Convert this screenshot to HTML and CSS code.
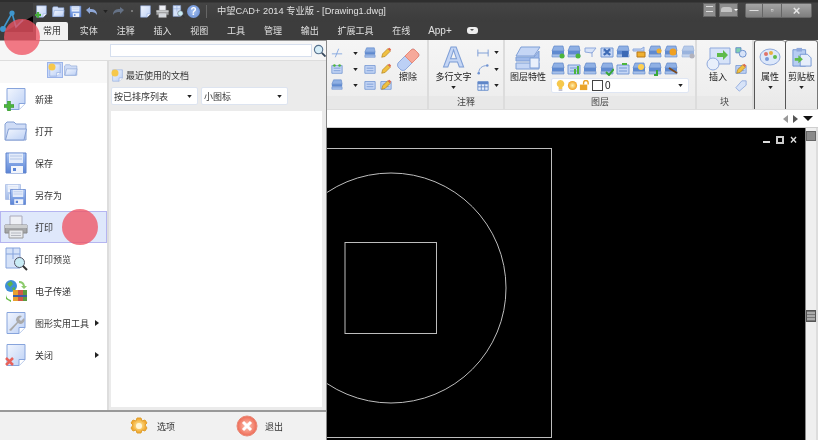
FILE: index.html
```html
<!DOCTYPE html>
<html lang="zh">
<head>
<meta charset="utf-8">
<title>中望CAD+ 2014 专业版</title>
<link rel="stylesheet" href="styles.css">
</head>
<body>
<svg class="defs" width="0" height="0" aria-hidden="true">
  <defs>
    <linearGradient id="pg" x1="0" y1="0" x2="1" y2="1"><stop offset="0" stop-color="#f2f6fe"/><stop offset="1" stop-color="#bcd0f5"/></linearGradient>
    <linearGradient id="bl" x1="0" y1="0" x2="0" y2="1"><stop offset="0" stop-color="#a9c4f2"/><stop offset="1" stop-color="#5a84d6"/></linearGradient>
    <radialGradient id="sun"><stop offset="0" stop-color="#fff2b0"/><stop offset="1" stop-color="#f0a020"/></radialGradient>
    <radialGradient id="redc"><stop offset="0" stop-color="#ffc9b8"/><stop offset="1" stop-color="#ee6a55"/></radialGradient>
    <symbol id="page" viewBox="0 0 24 24"><path d="M3 1.500h18v15l-6 6H3z" fill="url(#pg)" stroke="#87a4dc"/><path d="M21 16.500h-6v6" fill="#fff" stroke="#87a4dc"/></symbol>
    <symbol id="folder" viewBox="0 0 24 24"><path d="M1 21V5l2-2h7l2 2h10v16z" fill="#cfdcf6" stroke="#85a0d4"/><path d="M1.500 21l3-11h18l-2.500 11z" fill="url(#pg)" stroke="#85a0d4"/></symbol>
    <symbol id="floppy" viewBox="0 0 24 24"><path d="M2 2h20v20H2z" fill="url(#bl)" stroke="#5f82cc"/><path d="M5 2.500h14V12H5z" fill="#e4ecfa"/><path d="M6 5h12M6 8h12" stroke="#b4c6e8"/><path d="M7 15h12v7H7z" fill="#f2f5fb"/><path d="M9 17h3v3H9z" fill="#5a84d6"/></symbol>
    <symbol id="printer" viewBox="0 0 24 24"><path d="M6 1h12v10H6z" fill="#eef0f5" stroke="#aab"/><path d="M1 10h22v8H1z" fill="#a4a6a8" stroke="#888"/><path d="M1 10h22v3H1z" fill="#cccecf"/><path d="M5 15h14v8H5z" fill="#e8eaee" stroke="#999"/><path d="M7 18h10M7 20.500h10" stroke="#b5b8c0"/></symbol>
    <symbol id="preview" viewBox="0 0 24 24"><path d="M2 1h14v20H2z" fill="#d5e2f8" stroke="#87a4dc"/><path d="M9 1v11M2 7h14" stroke="#87a4dc"/><circle cx="15.500" cy="15.500" r="5" fill="#c9ecf5" stroke="#556"/><path d="M19 19l4 4" stroke="#333" stroke-width="2"/></symbol>
    <symbol id="etrans" viewBox="0 0 24 24"><circle cx="7" cy="7" r="6" fill="#3f8fd8"/><path d="M3 5l4-3 2 3-3 3zM8 9l3-1v3l-2 1z" fill="#5cb24a"/><path d="M15 2a6 6 0 0 1 6 5h2l-3 3-3-3h2a4 4 0 0 0-4-3z" fill="#8ccb6c"/><path d="M2 15a6 6 0 0 0 5 6v2l-5-3z" fill="#6cbb4c"/><path d="M9 11h5v11H9z" fill="#e8a030"/><path d="M14 11h5v11h-5z" fill="#d05848"/><path d="M19 11h4v11h-4z" fill="#5c9a40"/><path d="M9 16h14v2H9z" fill="#3a5fa8"/></symbol>
    <symbol id="plus" viewBox="0 0 10 10"><path d="M3.500 0h3v3.500H10v3H6.500V10h-3V6.500H0v-3h3.500z" fill="#4cb53c" stroke="#2e8a2a" stroke-width=".5"/></symbol>
    <symbol id="layer" viewBox="0 0 14 14"><path d="M3 1h9l1 5H1z" fill="#8fb0e4" stroke="#5f86c8" stroke-width=".7"/><path d="M1 6h12v3H1z" fill="#5f8ad0"/><path d="M1 9.500h12V12H1z" fill="#a5c0ec" stroke="#5f86c8" stroke-width=".6"/></symbol>
    <symbol id="small" viewBox="0 0 14 14"><path d="M1 3h12v9H1z" fill="#c5d6f5" stroke="#7598d4"/><path d="M3 6h8M3 9h8" stroke="#7598d4"/></symbol>
    <symbol id="pencil" viewBox="0 0 14 14"><path d="M2 12l1-4 6-6 3 3-6 6z" fill="#f0c040" stroke="#a87818" stroke-width=".7"/><path d="M9 2l3 3 1-2-2-2z" fill="#e06a50"/></symbol>
    <symbol id="caret" viewBox="0 0 6 4"><path d="M0 0h6L3 4z" fill="#222"/></symbol>
    <symbol id="mag" viewBox="0 0 14 14"><circle cx="6" cy="6" r="4.500" fill="#d7eef8" stroke="#55708c" stroke-width="1.200"/><path d="M9.500 9.500l4 4" stroke="#37485c" stroke-width="2"/></symbol>
  </defs>
</svg>

<div class="app">
  <header class="titlebar">
    <svg class="logo" viewBox="0 0 33 30"><path d="M0 0h33v30H0z" fill="#3a3a3a"/><path d="M33 14V30H4z" fill="#000"/><path d="M3 27L12 11l4 14 7-7" fill="none" stroke="#3f97cf" stroke-width="1.600"/><circle cx="12" cy="11" r="2.600" fill="#3f97cf"/><circle cx="3" cy="27" r="3" fill="#3f97cf"/></svg>
    <div class="quick">
      <svg class="q"><use href="#page"/><use href="#plus" width="6" height="6" x="0" y="7"/></svg>
      <svg class="q"><use href="#folder"/></svg>
      <svg class="q"><use href="#floppy"/></svg>
      <svg class="q wide" viewBox="0 0 14 12"><path d="M1 5l4-3v2c4 0 7 1 7 6-2-3-4-3-7-3v2z" fill="#8fa8d8"/></svg>
      <svg class="cr"><use href="#caret"/></svg>
      <svg class="q wide dim" viewBox="0 0 14 12"><path d="M13 5L9 2v2C5 4 2 5 2 10c2-3 4-3 7-3v2z" fill="#6f7f98"/></svg>
      <span class="dot"></span>
      <svg class="q"><use href="#page"/></svg>
      <svg class="q"><use href="#printer"/></svg>
      <svg class="q tight"><use href="#preview"/></svg>
      <span class="help">?</span>
    </div>
    <span class="sep"></span>
    <span class="title">中望CAD+ 2014 专业版 - [Drawing1.dwg]</span>
    <div class="winbtns">
      <span class="tool"><i></i></span>
      <span class="tool skin"><i></i><b></b></span>
      <div class="caption"><span class="cap">—</span><span class="cap">▫</span><span class="cap closecap">×</span></div>
    </div>
  </header>

  <nav class="tabs">
    <span class="tab active">常用</span>
    <span class="tab">实体</span>
    <span class="tab">注释</span>
    <span class="tab">插入</span>
    <span class="tab">视图</span>
    <span class="tab">工具</span>
    <span class="tab">管理</span>
    <span class="tab">输出</span>
    <span class="tab">扩展工具</span>
    <span class="tab">在线</span>
    <span class="tab latin">App+</span>
    <span class="tabdown"></span>
  </nav>

  <section class="ribbon">
    <div class="panel p-draw">
      <div class="pbody">
        <div class="smallgrid">
          <svg class="s14" viewBox="0 0 14 14"><path d="M1 8h12M9 2L5 12" stroke="#7ea3de" fill="none"/></svg><svg class="cr"><use href="#caret"/></svg><svg class="s14"><use href="#layer"/></svg><svg class="s14"><use href="#pencil"/></svg>
          <svg class="s14" viewBox="0 0 14 14"><use href="#small"/><circle cx="4" cy="3" r="1.500" fill="#4cb53c"/><circle cx="10" cy="3" r="1.500" fill="#4cb53c"/></svg><svg class="cr"><use href="#caret"/></svg><svg class="s14"><use href="#small"/></svg><svg class="s14"><use href="#pencil"/></svg>
          <svg class="s14"><use href="#layer"/></svg><svg class="cr"><use href="#caret"/></svg><svg class="s14"><use href="#small"/></svg><svg class="s14"><use href="#small"/><use href="#pencil"/></svg>
        </div>
        <div class="big erase">
          <svg class="b24" viewBox="0 0 24 24"><path d="M2 16L15 3q2-2 4 0l3 3q2 2 0 4L9 23q-2 1-4 0l-3-3q-1-2 0-4z" fill="#bcd0f5" stroke="#8fa9dc"/><path d="M9 9l6-6q2-2 4 0l3 3q2 2 0 4l-6 6z" fill="#f6a99a" stroke="#e88a78"/></svg>
          <span class="lbl">擦除</span>
        </div>
      </div>
      <div class="plabel"></div>
    </div>
    <div class="panel p-note">
      <div class="pbody">
        <div class="big text">
          <span class="biga">A</span>
          <span class="lbl">多行文字</span>
          <svg class="cr"><use href="#caret"/></svg>
        </div>
        <div class="smallcol">
          <span><svg class="s14" viewBox="0 0 14 14"><path d="M1 3v8M13 3v8M1 7h12" stroke="#6f93d2" fill="none"/></svg><svg class="cr"><use href="#caret"/></svg></span>
          <span><svg class="s14" viewBox="0 0 14 14"><path d="M2 12C2 6 6 3 12 3" stroke="#6f93d2" fill="none"/><circle cx="2" cy="12" r="1.500" fill="#6f93d2"/><circle cx="12" cy="3" r="1.500" fill="#6f93d2"/></svg><svg class="cr"><use href="#caret"/></svg></span>
          <span><svg class="s14" viewBox="0 0 14 14"><path d="M1 2h12v10H1z" fill="#e5edfb" stroke="#5f86c8"/><path d="M1 2h12v3H1z" fill="#5f86c8"/><path d="M1 8h12M5 5v7M9 5v7" stroke="#5f86c8"/></svg><svg class="cr"><use href="#caret"/></svg></span>
        </div>
      </div>
      <div class="plabel">注释</div>
    </div>
    <div class="panel p-layer">
      <div class="pbody">
        <div class="big stack">
          <svg class="b26" viewBox="0 0 26 24"><path d="M6 1h19l-6 9H1z" fill="#c5d6f5" stroke="#7f9fd6"/><path d="M1 11h18l5-6v10H1z" fill="#9fbaea" stroke="#7f9fd6"/><path d="M1 17h23v6H1z" fill="#c5d6f5" stroke="#7f9fd6"/><path d="M15 12h9v10h-9z" fill="#eaf0fb" stroke="#7f9fd6"/></svg>
          <span class="lbl">图层特性</span>
        </div>
        <div class="layerside">
          <div class="layergrid">
            <svg class="s14"><use href="#layer"/><circle cx="11" cy="11" r="2.500" fill="#4cb53c"/></svg>
            <svg class="s14"><use href="#layer"/><circle cx="11" cy="11" r="2.500" fill="#4cb53c"/></svg>
            <svg class="s14" viewBox="0 0 14 14"><path d="M2 3h11l-4 5-7-1z" fill="#d7e3f8" stroke="#8fa9dc"/><path d="M9 7v5" stroke="#8fa9dc"/></svg>
            <svg class="s14"><use href="#small"/><path d="M4 4l6 6M10 4l-6 6" stroke="#3d6ab5" stroke-width="2"/></svg>
            <svg class="s14"><use href="#layer"/><path d="M6 6h6v6H6z" fill="#3d6ab5"/></svg>
            <svg class="s14" viewBox="0 0 14 14"><path d="M1 4h8l3-2v4H1z" fill="#c5d6f5" stroke="#8fa9dc"/><path d="M5 7h8v5H5z" fill="#f0b030" stroke="#b87818"/></svg>
            <svg class="s14"><use href="#layer"/><circle cx="11" cy="6" r="2.500" fill="#f0b030"/></svg>
            <svg class="s14"><use href="#layer"/><circle cx="9" cy="7" r="3.500" fill="#f0a020"/></svg>
            <svg class="s14 fade"><use href="#layer"/><circle cx="11" cy="11" r="2.500" fill="#889"/></svg>
            <svg class="s14"><use href="#layer"/></svg>
            <svg class="s14"><use href="#small"/><path d="M8 12V7M11 12V4" stroke="#4cb53c" stroke-width="2"/></svg>
            <svg class="s14"><use href="#layer"/></svg>
            <svg class="s14"><use href="#layer"/><path d="M6 10l3 3 5-6" stroke="#3aa83a" stroke-width="2" fill="none"/></svg>
            <svg class="s14"><use href="#small"/><path d="M6 2h5" stroke="#4cb53c" stroke-width="2"/></svg>
            <svg class="s14"><use href="#layer"/><circle cx="9" cy="5" r="3" fill="#ffd050"/></svg>
            <svg class="s14"><use href="#layer"/><path d="M9 8v5H6" stroke="#3aa83a" stroke-width="2" fill="none"/></svg>
            <svg class="s14"><use href="#layer"/><path d="M5 6l8 5" stroke="#7a4a20" stroke-width="2"/></svg>
          </div>
          <div class="layercombo">
            <svg class="c11" viewBox="0 0 12 12"><path d="M6 0a4 4 0 0 1 2 7.500V10H4V7.500A4 4 0 0 1 6 0z" fill="#f6c84c"/><path d="M4 11h4" stroke="#88a"/></svg>
            <svg class="c11" viewBox="0 0 12 12"><circle cx="6" cy="6" r="5" fill="url(#sun)"/></svg>
            <svg class="c11" viewBox="0 0 12 12"><path d="M1 5h8v6H1z" fill="#eaa52a"/><path d="M5 5V3a2.500 2.500 0 0 1 5 0v2" fill="none" stroke="#eaa52a" stroke-width="1.500"/></svg>
            <span class="swatch"></span>
            <span class="zero">0</span>
            <svg class="cr end"><use href="#caret"/></svg>
          </div>
        </div>
      </div>
      <div class="plabel">图层</div>
    </div>
    <div class="panel p-block">
      <div class="pbody">
        <div class="big insert">
          <svg class="b26" viewBox="0 0 26 24"><path d="M5 1h20v16H5z" fill="#d7e3f8" stroke="#8fa9dc"/><circle cx="8" cy="17" r="6" fill="#e8effb" stroke="#8fa9dc"/><path d="M12 6h6V3l5 5-5 5v-3h-6z" fill="#5fbb4a"/></svg>
          <span class="lbl">插入</span>
        </div>
        <div class="smallcol three">
          <svg class="s14" viewBox="0 0 14 14"><path d="M1 2h6v6H1z" fill="#7fd0b0" stroke="#5f86c8"/><circle cx="9" cy="9" r="4" fill="#d7e3f8" stroke="#5f86c8"/></svg>
          <svg class="s14" viewBox="0 0 14 14"><use href="#small"/><use href="#pencil"/></svg>
          <svg class="s14" viewBox="0 0 14 14"><path d="M1 9l7-8h5v5l-8 7z" fill="#d7e3f8" stroke="#8fa9dc"/></svg>
        </div>
      </div>
      <div class="plabel">块</div>
    </div>
    <div class="panel p-tall">
      <div class="big prop">
        <svg class="b22" viewBox="0 0 22 20"><ellipse cx="11" cy="10" rx="10" ry="8" fill="#dde8fa" stroke="#8fa9dc"/><circle cx="7" cy="7" r="2" fill="#e0736a"/><circle cx="12" cy="6" r="2" fill="#e8b040"/><circle cx="16" cy="10" r="2" fill="#5fbb4a"/><circle cx="8" cy="12" r="2" fill="#7a9ad8"/></svg>
        <span class="lbl">属性</span>
        <svg class="cr"><use href="#caret"/></svg>
      </div>
    </div>
    <div class="panel p-tall last">
      <div class="big clip">
        <svg class="b22" viewBox="0 0 22 22"><path d="M1 3h14v18H1z" fill="#b7cdf2" stroke="#6f93d2"/><path d="M5 1h6v4H5z" fill="#8fa9dc"/><path d="M9 8h8l4 4v9H9z" fill="#e6eefb" stroke="#6f93d2"/><path d="M3 12h4v-3l5 4.500L7 18v-3H3z" fill="#5fbb4a"/></svg>
        <span class="lbl">剪贴板</span>
        <svg class="cr"><use href="#caret"/></svg>
      </div>
    </div>
  </section>

  <div class="docstrip">
    <span class="arrow left"></span>
    <span class="arrow right"></span>
    <span class="arrow down"></span>
  </div>

  <main class="workspace">
    <div class="canvas">
      <svg class="drawing" viewBox="0 0 805 440" width="805" height="440">
        <g fill="none" stroke="#bdbdbd">
          <rect x="320.500" y="148.500" width="231" height="289"/>
          <circle cx="391" cy="288" r="115"/>
          <rect x="345" y="242.500" width="91.500" height="91"/>
        </g>
      </svg>
      <div class="viewbtns"><i class="vmin"></i><i class="vmax"></i><b>×</b></div>
    </div>
    <aside class="scrollbar">
      <span class="sb-btn"></span>
      <span class="sb-thumb"></span>
    </aside>
  </main>

  <div class="appmenu">
    <div class="searchrow">
      <input class="search" type="text" aria-label="搜索">
      <svg class="mag"><use href="#mag"/></svg>
    </div>
    <div class="menumain">
      <div class="leftcol">
        <div class="viewtoggle">
          <span class="vt on"><svg class="s14"><use href="#page"/><circle cx="4" cy="4" r="3.500" fill="#f6c84c"/></svg></span>
          <span class="vt"><svg class="s14"><use href="#folder"/></svg></span>
        </div>
        <ul class="items">
          <li><svg class="mi"><use href="#page"/><use href="#plus" width="10" height="10" x="0" y="14"/></svg><span>新建</span></li>
          <li><svg class="mi"><use href="#folder"/></svg><span>打开</span></li>
          <li><svg class="mi"><use href="#floppy"/></svg><span>保存</span></li>
          <li><svg class="mi" viewBox="0 0 24 24"><use href="#floppy" width="18" height="18" x="0" y="0" opacity=".55"/><use href="#floppy" width="18" height="18" x="5" y="5"/></svg><span>另存为</span></li>
          <li class="hot"><svg class="mi"><use href="#printer"/></svg><span>打印</span></li>
          <li><svg class="mi"><use href="#preview"/></svg><span>打印预览</span></li>
          <li><svg class="mi"><use href="#etrans"/></svg><span>电子传递</span></li>
          <li><svg class="mi"><use href="#page"/><path d="M5 19l8-8a4 4 0 0 1 5-6l-3 3 2 2 3-3a4 4 0 0 1-6 5l-7 8z" fill="#a9a9a9"/></svg><span>图形实用工具</span><em></em></li>
          <li><svg class="mi"><use href="#page"/><path d="M2 15l7 7M9 15l-7 7" stroke="#e8625a" stroke-width="2.500"/></svg><span>关闭</span><em></em></li>
        </ul>
      </div>
      <div class="rightcol">
        <div class="recent"><svg class="s14"><use href="#page"/><circle cx="4" cy="4" r="3.500" fill="#f6c84c"/></svg><span>最近使用的文档</span></div>
        <div class="selects">
          <span class="sel">按已排序列表<svg class="cr"><use href="#caret"/></svg></span>
          <span class="sel">小图标<svg class="cr"><use href="#caret"/></svg></span>
        </div>
        <div class="list"></div>
      </div>
    </div>
    <footer class="menufoot">
      <span class="fbtn gear"><svg class="f22" viewBox="0 0 22 22"><path d="M9 1h4l1 3 3-1 2 3-2 2 2 3-2 3-3-1-1 3H9l-1-3-3 1-2-3 2-3-2-2 2-3 3 1z" transform="translate(0 2)" fill="url(#sun)" stroke="#e0a030"/><circle cx="11" cy="11" r="3" fill="#fff6d8"/></svg>选项</span>
      <span class="fbtn"><svg class="f22" viewBox="0 0 22 22"><circle cx="11" cy="11" r="10" fill="url(#redc)" stroke="#e88a78"/><path d="M7 7l8 8M15 7l-8 8" stroke="#fff" stroke-width="3"/></svg>退出</span>
    </footer>
  </div>

  <span class="touch t1"></span>
  <span class="touch t2"></span>
</div>
</body>
</html>
```

FILE: styles.css
```css
* { box-sizing: border-box; }
html, body { margin: 0; padding: 0; background: #000; }
body { width: 818px; height: 440px; overflow: hidden; font-family: "Liberation Sans", "Noto Sans CJK SC", sans-serif; font-size: 9px; color: #333; }
.defs { position: absolute; }
svg { display: block; flex: none; }
i, em { font-style: normal; }

.app { position: relative; width: 818px; height: 440px; display: flex; flex-direction: column; overflow: hidden; filter: blur(.3px); }

/* title bar */
.titlebar { height: 22px; display: flex; align-items: center; background: linear-gradient(#2e2e2e, #2e2e2e 2px, #444 3px, #3c3c3c); color: #ddd; position: relative; }
.logo { width: 33px; height: 30px; position: absolute; left: 0; top: 2px; }
.quick { margin-left: 35px; display: flex; align-items: center; gap: 4px; }
.q { width: 13px; height: 13px; }
.wide { width: 14px; height: 12px; margin-left: -1px; }
.dim { opacity: .8; }
.cr { width: 5px; height: 3px; }
.dot { width: 2px; height: 2px; background: #777; margin: 0 2px; }
.tight { margin-left: -1px; }
.help { width: 13px; height: 13px; margin-left: -2px; border-radius: 50%; background: radial-gradient(#a4c0f0, #5f86d0); color: #fff; font: bold 10px/13px "Liberation Sans", sans-serif; text-align: center; }
.sep { width: 1px; height: 13px; background: #666; margin: 0 10px 0 6px; }
.title { font-size: 9.250px; white-space: nowrap; color: #e0e0e0; line-height: 22px; }
.winbtns { margin-left: auto; display: flex; align-items: center; gap: 3px; padding: 0 6px 2px 0; }
.tool { width: 13px; height: 14px; background: #8e8e8e; border: 1px solid #666; position: relative; display: block; }
.tool i { display: block; margin: 2px; height: 6px; border-top: 1px solid #ddd; border-bottom: 1px solid #ddd; }
.skin { width: 19px; display: flex; }
.skin i { width: 11px; flex: none; background: #c4c4c4; border: 0; height: 5px; margin: 3px 1px; border-radius: 3px 3px 0 0; }
.skin b { width: 0; height: 0; margin: 5px 0 0 1px; border: 2px solid transparent; border-top-color: #fff; }
.caption { display: flex; margin-left: 4px; height: 15px; border: 1px solid #666; border-radius: 2px; }
.cap { width: 19px; background: linear-gradient(#a4a4a4, #7e7e7e); border-right: 1px solid #666; text-align: center; color: #e6e6e6; font: bold 9px/13px "Liberation Sans", "DejaVu Sans", sans-serif; }
.cap:first-child { width: 17px; }
.closecap { width: 29px; border-right: 0; font-size: 13px; }

/* tabs */
.tabs { height: 18px; display: flex; gap: 4.800px; padding-left: 36px; background: #3d3d3d; color: #e0e0e0; align-items: stretch; }
.tab { padding: 0 7px; font-size: 9px; line-height: 18px; white-space: nowrap; }
.tab.latin { font-size: 10px; padding: 0 6px; }
.tab.active { background: #f2f2f2; color: #333; border-radius: 2px 2px 0 0; }
.tabdown { width: 11px; height: 7px; background: #eee; border-radius: 3px; margin: 5px 0 0 4px; position: relative; }
.tabdown::after { content: ""; position: absolute; left: 3px; top: 2px; border: 2.500px solid transparent; border-top-color: #555; }

/* ribbon */
.ribbon { height: 70px; display: flex; background: linear-gradient(#f5f5f5, #ececec); border-bottom: 1px solid #ddd; }
.panel { display: flex; flex-direction: column; border-right: 2px solid #dcdcdc; }
.pbody { flex: 1; display: flex; min-height: 0; }
.plabel { height: 13px; background: #e8e8e8; text-align: center; font-size: 9px; line-height: 13px; color: #444; }
.big { display: flex; flex-direction: column; align-items: center; padding-top: 7px; }
.lbl { font-size: 9px; line-height: 12px; white-space: nowrap; color: #222; }
.big .cr { margin-top: 3px; }
.b24 { width: 24px; height: 24px; }
.b26 { width: 26px; height: 24px; }
.b22 { width: 22px; height: 20px; }
.s14 { width: 14px; height: 14px; }

.p-draw { width: 429px; }
.p-draw .pbody { justify-content: flex-end; }
.smallgrid { display: grid; grid-template-columns: 18px 18px 12px 20px; grid-auto-rows: 16px; align-items: center; justify-items: center; padding-top: 5px; }
.smallgrid .s14, .smallcol .s14 { width: 12px; height: 12px; }
.erase { width: 31px; padding-right: 7px; }

.p-note { width: 76px; }
.text { width: 47px; margin-left: 1px; padding-top: 5px; }
.biga { font: bold 30px/24px "Liberation Sans", sans-serif; color: #c5d6f5; -webkit-text-stroke: 1px #7f9fd6; height: 24px; }
.text .lbl { margin-top: 2px; }
.smallcol { display: flex; flex-direction: column; gap: 1.500px; padding-top: 5px; }
.smallcol span { display: flex; align-items: center; gap: 5px; height: 15px; }
.three { gap: 5px; padding-top: 6px; }

.p-layer { width: 192px; }
.stack { width: 46px; padding-top: 6px; }
.stack .lbl { margin-top: 1px; }
.layerside { padding-top: 5px; }
.layergrid { display: grid; grid-template-columns: repeat(9, 14px); column-gap: 2.200px; row-gap: 3px; grid-auto-rows: 14px; }
.fade { opacity: .6; }
.layercombo { margin-top: 2px; width: 138px; height: 15px; background: #fff; border: 1px solid #dfe6f3; border-radius: 2px; display: flex; align-items: center; gap: 1px; padding: 0 5px 0 3px; }
.c11 { width: 11px; height: 11px; }
.swatch { width: 11px; height: 11px; border: 1px solid #444; background: #fff; margin-left: 1px; }
.zero { font: 10px "Liberation Sans", sans-serif; color: #222; margin-left: 1px; }
.end { margin-left: auto; }

.p-block { width: 57px; }
.insert { width: 38px; padding-left: 4px; }

.p-tall { width: 31px; border-left: 1px solid #555; border-right: 0; border-top: 1px solid #777; border-radius: 3px 3px 0 0; background: linear-gradient(#f8f8f8, #e8e8e8); }
.p-tall.last { width: 33px; border-right: 1px solid #777; }
.p-tall .big { padding-top: 6px; }
.p-tall .lbl { margin-top: 4px; }

/* document strip */
.docstrip { height: 18px; flex: none; background: #fff; display: flex; align-items: center; justify-content: flex-end; gap: 4px; padding-right: 5px; border-bottom: 1px solid #cfcfcf; }
.arrow { width: 0; height: 0; border: 4px solid transparent; }
.left { border-right-color: #999; border-left-width: 0; border-right-width: 5px; margin-right: 1px; }
.right { border-left-color: #555; border-right-width: 0; border-left-width: 5px; margin-right: 1px; }
.down { border-top-color: #111; border-top-width: 5px; border-bottom-width: 0; border-left-width: 5px; border-right-width: 5px; }

/* workspace */
.workspace { flex: 1; display: flex; min-height: 0; }
.canvas { flex: 1; position: relative; background: #000; overflow: hidden; }
.drawing { position: absolute; left: 0; top: -128px; }
.viewbtns { position: absolute; right: 8px; top: 7px; display: flex; align-items: center; height: 10px; gap: 6px; color: #ddd; }
.vmin { width: 7px; height: 2px; background: #ddd; margin-top: 4px; }
.vmax { width: 8px; height: 8px; border: 2px solid #ccc; }
.viewbtns b { font: bold 12px/10px "Liberation Sans", sans-serif; }
.scrollbar { width: 13px; background: #efefef; border-left: 1px solid #888; border-right: 2px solid #ddd; display: flex; flex-direction: column; align-items: center; padding-top: 3px; }
.sb-btn { width: 10px; height: 10px; background: #8a8a8a; border: 1px solid #666; flex: none; }
.sb-thumb { width: 10px; height: 12px; flex: none; margin-top: 169px; background: repeating-linear-gradient(#777 0 1px, #aaa 1px 3px); border: 1px solid #555; }

/* application menu */
.appmenu { position: absolute; left: 0; top: 40px; width: 327px; height: 400px; display: flex; flex-direction: column; background: #ebebeb; border-top: 1px solid #999; border-right: 1px solid #888; }
.searchrow { height: 20px; flex: none; display: flex; align-items: center; padding-left: 110px; background: #f6f6f6; border-bottom: 1px solid #ddd; }
.search { width: 204px; height: 13px; background: #fff; border: 1px solid #d6dfee; padding: 0; outline: 0; }
.mag { width: 13px; height: 13px; margin-left: 1px; }
.menumain { flex: 1; display: flex; min-height: 0; }
.leftcol { width: 109px; flex: none; background: #fff; border-right: 2px solid #ddd; display: flex; flex-direction: column; }
.viewtoggle { height: 22px; flex: none; display: flex; justify-content: flex-end; align-items: flex-start; padding: 1px 28px 0 0; background: #f8f8f8; }
.vt { width: 16px; height: 16px; padding: 1px; }
.vt.on { background: #c9d8f8; border: 1px solid #9bb4ea; padding: 0; }
.items { list-style: none; margin: 0; padding: 0; width: 107px; }
.items li { height: 32px; display: flex; align-items: center; padding-left: 4px; gap: 7px; font-size: 9px; color: #333; position: relative; }
.items li.hot { background: #dfe8fb; border: 1px solid #b5b5f0; padding-left: 3px; }
.mi { width: 24px; height: 24px; }
.items em { position: absolute; right: 8px; top: 13px; border: 3px solid transparent; border-left: 4px solid #222; border-right-width: 0; }
.rightcol { flex: 1; display: flex; flex-direction: column; padding: 6px 4px 3px 2px; min-width: 0; }
.recent { display: flex; align-items: center; gap: 2px; height: 16px; margin-bottom: 4px; font-size: 9px; color: #333; }
.recent .s14 { width: 13px; height: 13px; }
.selects { display: flex; gap: 3px; height: 18px; flex: none; }
.sel { width: 87px; background: #fff; border: 1px solid #dde4f0; border-radius: 2px; display: flex; align-items: center; justify-content: space-between; padding: 0 5px 0 2px; font-size: 9px; color: #333; }
.list { flex: 1; margin-top: 6px; background: #fff; }
.menufoot { height: 30px; flex: none; display: flex; background: #f1f1f1; border-top: 2px solid #999; padding: 0 0 0 128px; align-items: center; font-size: 9px; color: #333; gap: 61px; }
.fbtn { display: flex; align-items: center; gap: 7px; }
.f22 { width: 22px; height: 22px; }

/* touch indicators */
.touch { position: absolute; width: 36px; height: 36px; border-radius: 50%; background: rgba(240, 85, 100, .78); }
.t1 { left: 4px; top: 19px; }
.t2 { left: 62px; top: 209px; }
```
